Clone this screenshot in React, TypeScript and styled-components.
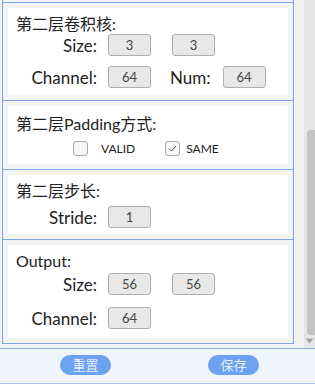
import React from "react";
import styled, { createGlobalStyle } from "styled-components";

const GlobalStyle = createGlobalStyle`
  html, body {
    margin: 0;
    padding: 0;
    background: #f2f2f2;
  }
  body {
    font-family: Lato, "Noto Sans CJK SC", sans-serif;
    color: #222;
  }
`;

const Page = styled.div`
  display: flex;
  flex-flow: column nowrap;
  width: 315px;
  height: 384px;
  background: #f2f2f2;
  overflow: hidden;
`;

const Main = styled.div`
  display: flex;
  flex-flow: row nowrap;
  height: 350px;
`;

const ContentColumn = styled.div`
  flex: 1;
  padding: 0 10px 0 2px;
`;

const Panel = styled.div`
  display: flex;
  flex-flow: column nowrap;
  padding-top: 2px;
  border: 1px solid #7ea6e6;
  border-top: 0;
`;

const Section = styled.div`
  padding: 5px;
  border-top: 1px solid #7ea6e6;
`;

const Card = styled.div<{ $pt?: number; $pb?: number }>`
  display: flex;
  flex-flow: column nowrap;
  background: #fff;
  padding: ${(p) => p.$pt ?? 6}px 8px ${(p) => p.$pb ?? 7}px;
`;

const Title = styled.div`
  font-size: 16px;
  line-height: 20px;
  color: #222;
`;

const Rows = styled.div<{ $mt?: number; $gap?: number }>`
  display: flex;
  flex-flow: column nowrap;
  margin-top: ${(p) => p.$mt ?? 0}px;
  gap: ${(p) => p.$gap ?? 10}px;
`;

const Row = styled.div`
  display: flex;
  flex-flow: row nowrap;
  align-items: center;
  height: 22px;
`;

const Label = styled.span<{ $ml?: number; $mr?: number; $w?: number }>`
  font-size: 17px;
  color: #222;
  text-align: right;
  width: ${(p) => (p.$w ? `${p.$w}px` : "auto")};
  margin-left: ${(p) => p.$ml ?? 0}px;
  margin-right: ${(p) => p.$mr ?? 11}px;
  white-space: nowrap;
`;

const ValueBox = styled.div<{ $ml?: number }>`
  display: flex;
  justify-content: center;
  align-items: center;
  width: 43px;
  height: 22px;
  box-sizing: border-box;
  margin-left: ${(p) => p.$ml ?? 0}px;
  border: 1px solid #aeaeae;
  border-radius: 3px;
  background: #e8e8e8;
  color: #444;
  font-size: 13px;
`;

const OptionRow = styled.div`
  display: flex;
  flex-flow: row nowrap;
  align-items: center;
  height: 20px;
  margin-top: 4px;
  padding-left: 57px;
  gap: 30px;
`;

const Option = styled.label<{ $gap: number }>`
  display: flex;
  align-items: center;
  gap: ${(p) => p.$gap}px;
  font-size: 12px;
  color: #222;
`;

const Check = styled.span`
  display: flex;
  justify-content: center;
  align-items: center;
  width: 15px;
  height: 15px;
  box-sizing: border-box;
  border: 1px solid #a9a9a9;
  border-radius: 3px;
  background: #f7f7f7;
`;

const ScrollTrack = styled.div`
  display: flex;
  flex-flow: column nowrap;
  align-items: flex-end;
  width: 11px;
  background: #e6e6e6;
`;

const ThumbSpace = styled.div`
  height: 130px;
`;

const Thumb = styled.div`
  width: 8px;
  height: 205px;
  background: #c4c4c4;
  border-radius: 4px 0 0 4px;
`;

const Arrow = styled.div`
  display: flex;
  justify-content: center;
  width: 11px;
  margin-top: 3px;
`;

const Footer = styled.div`
  display: flex;
  flex-flow: row nowrap;
  align-items: center;
  height: 32px;
  padding: 0 0 2px 60px;
  gap: 97px;
  background: #eff4fd;
  border-top: 1px solid #8eb2ea;
  border-bottom: 1px solid #a6c2ee;
`;

const Button = styled.button`
  width: 51px;
  height: 20px;
  padding: 0;
  border: 0;
  border-radius: 10px;
  background: #6da2f1;
  color: #e4eeff;
  font-family: "Noto Sans CJK SC", sans-serif;
  font-size: 13px;
  line-height: 20px;
  cursor: pointer;
`;

const CheckMark = () => (
  <svg width="11" height="11" viewBox="0 0 11 11">
    <path d="M2 5.5 L4.5 8 L9 3" fill="none" stroke="#555" strokeWidth="1" />
  </svg>
);

const DownArrow = () => (
  <svg width="9" height="6" viewBox="0 0 9 6">
    <path d="M0.5 0.5 L8.5 0.5 L4.5 5.5 Z" fill="#a3a3a3" />
  </svg>
);

const App = () => {
  return (
    <Page>
      <GlobalStyle />
      <Main>
        <ContentColumn>
          <Panel>
            <Section>
              <Card>
                <Title>第二层卷积核:</Title>
                <Rows>
                  <Row>
                    <Label $w={81}>Size:</Label>
                    <ValueBox>3</ValueBox>
                    <ValueBox $ml={21}>3</ValueBox>
                  </Row>
                  <Row>
                    <Label $w={81}>Channel:</Label>
                    <ValueBox>64</ValueBox>
                    <Label $ml={19} $mr={12}>
                      Num:
                    </Label>
                    <ValueBox>64</ValueBox>
                  </Row>
                </Rows>
              </Card>
            </Section>
            <Section>
              <Card $pt={8} $pb={6}>
                <Title>第二层Padding方式:</Title>
                <OptionRow>
                  <Option $gap={13}>
                    <Check />
                    VALID
                  </Option>
                  <Option $gap={6}>
                    <Check>
                      <CheckMark />
                    </Check>
                    SAME
                  </Option>
                </OptionRow>
              </Card>
            </Section>
            <Section>
              <Card $pb={6}>
                <Title>第二层步长:</Title>
                <Rows $mt={5}>
                  <Row>
                    <Label $w={81}>Stride:</Label>
                    <ValueBox>1</ValueBox>
                  </Row>
                </Rows>
              </Card>
            </Section>
            <Section>
              <Card $pb={9}>
                <Title>Output:</Title>
                <Rows $mt={2} $gap={12}>
                  <Row>
                    <Label $w={81}>Size:</Label>
                    <ValueBox>56</ValueBox>
                    <ValueBox $ml={21}>56</ValueBox>
                  </Row>
                  <Row>
                    <Label $w={81}>Channel:</Label>
                    <ValueBox>64</ValueBox>
                  </Row>
                </Rows>
              </Card>
            </Section>
          </Panel>
        </ContentColumn>
        <ScrollTrack>
          <ThumbSpace />
          <Thumb />
          <Arrow>
            <DownArrow />
          </Arrow>
        </ScrollTrack>
      </Main>
      <Footer>
        <Button>重置</Button>
        <Button>保存</Button>
      </Footer>
    </Page>
  );
};

export default App;
